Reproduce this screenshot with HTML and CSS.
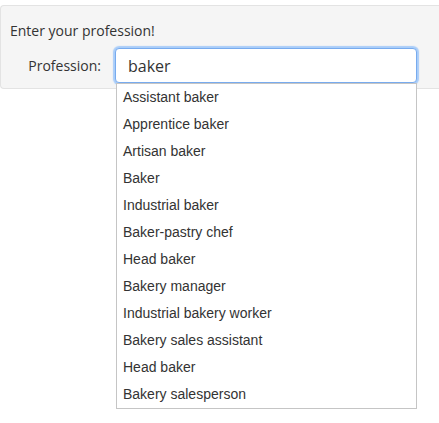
FILE: index.html
```html
<!DOCTYPE html>
<html lang="en">
<head>
<meta charset="utf-8">
<title>Profession</title>
<link rel="stylesheet" href="styles.css">
</head>
<body>
<div class="well">
  <div class="title">Enter your profession!</div>
  <div class="row">
    <label class="label" for="prof">Profession:</label>
    <div class="field">
      <input id="prof" class="input" type="text" value="baker">
      <ul class="menu">
        <li>Assistant baker</li>
        <li>Apprentice baker</li>
        <li>Artisan baker</li>
        <li>Baker</li>
        <li>Industrial baker</li>
        <li>Baker-pastry chef</li>
        <li>Head baker</li>
        <li>Bakery manager</li>
        <li>Industrial bakery worker</li>
        <li>Bakery sales assistant</li>
        <li>Head baker</li>
        <li>Bakery salesperson</li>
      </ul>
    </div>
  </div>
</div>
</body>
</html>
```
FILE: styles.css
```css
body {
  margin: 0;
  padding: 0;
  min-height: 423px;
  background: #fff;
  font-family: "Open Sans", "Noto Sans", sans-serif;
  color: #333;
}
.well {
  margin-top: 5px;
  border: 1px solid #e3e3e3;
  border-right: none;
  border-radius: 4px 0 0 4px;
  background: #f5f5f5;
  padding: 15px 9px 5px;
}
.title {
  font-size: 14px;
  line-height: 20px;
  margin-bottom: 7px;
}
.row {
  display: flex;
  align-items: center;
}
.label {
  width: 91px;
  text-align: right;
  font-size: 14px;
  line-height: 20px;
  margin-right: 14px;
}
.field {
  position: relative;
  width: 302px;
}
.input {
  display: block;
  width: 100%;
  height: 35px;
  box-sizing: border-box;
  margin: 0;
  padding: 0 12px;
  border: 1px solid #78abee;
  border-radius: 4px;
  box-shadow: 0 0 1px 2px rgba(150, 195, 250, 0.8);
  outline: none;
  background: #fff;
  font-family: "Open Sans", "Noto Sans", sans-serif;
  font-size: 16px;
  color: #333;
}
.menu {
  position: absolute;
  top: 35px;
  left: 1px;
  z-index: 10;
  width: 301px;
  box-sizing: border-box;
  margin: 0;
  padding: 0;
  list-style: none;
  background: #fff;
  border: 1px solid #c5c5c5;
  font-family: "Liberation Sans", Arial, sans-serif;
  font-size: 14px;
  color: #333;
}
.menu li {
  height: 27px;
  line-height: 27px;
  padding-left: 6px;
}
```
